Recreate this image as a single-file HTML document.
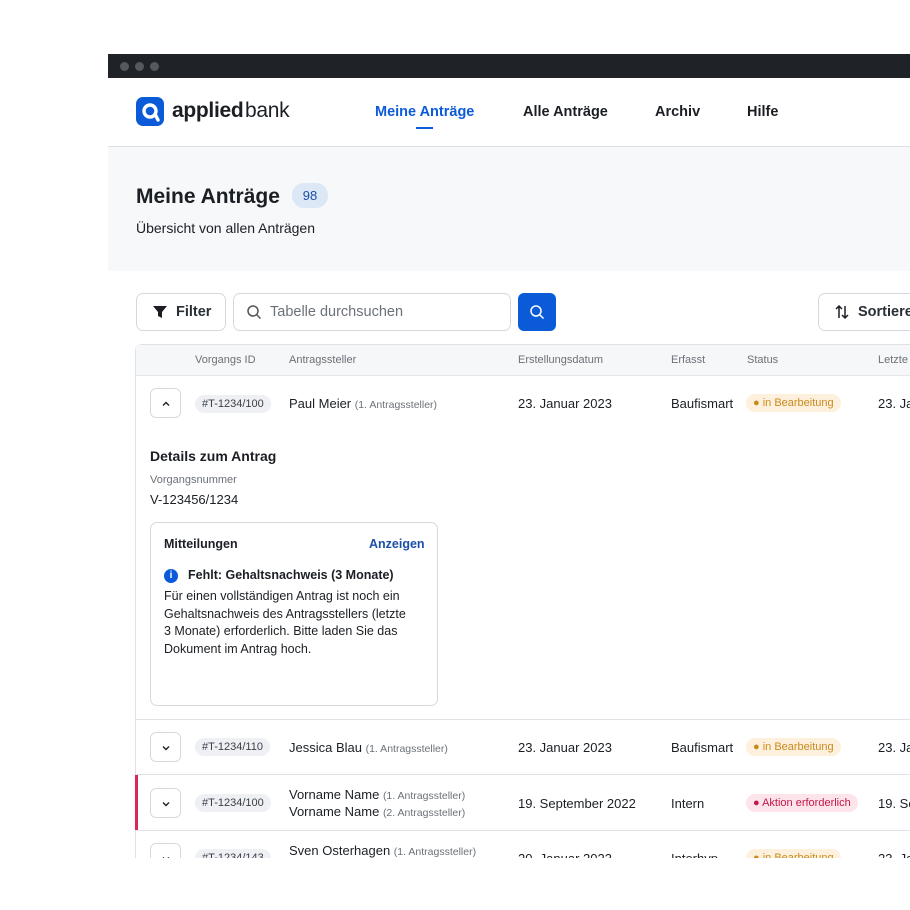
<!DOCTYPE html>
<html><head><meta charset="utf-8"><style>
*{box-sizing:border-box;margin:0;padding:0}
body{width:910px;height:910px;background:#fff;font-family:"Liberation Sans",sans-serif;color:#1b1f24;position:relative;overflow:hidden}
.a{position:absolute;white-space:nowrap}
.frame{position:absolute;left:108px;top:54px;width:802px;height:804px;overflow:hidden;background:#fff}
.bar{position:absolute;left:0;top:0;width:802px;height:24px;background:#1f2226}
.dot{position:absolute;top:8px;width:9px;height:9px;border-radius:50%;background:#55595e}
.nav{font-size:14.5px;font-weight:bold;top:50px}
.btn{position:absolute;border:1px solid #d5d9de;border-radius:7px;background:#fff}
.th{font-size:11px;color:#6b7178;top:300px}
.tag{position:absolute;background:#eef0f3;border-radius:9px;font-size:11px;color:#3a3f45;padding:3px 7px}
.exp{position:absolute;width:31px;height:30px;border:1px solid #d5d9de;border-radius:6px;left:42px}
.exp svg{position:absolute;left:10px;top:10px}
.cell{font-size:13px;color:#1b1f24}
.sub{font-size:10.5px;color:#6b7178}
.st{position:absolute;border-radius:10px;font-size:11px;padding:3px 7px}
.hr{position:absolute;left:28px;width:780px;height:1px;background:#dfe2e6}
</style></head><body>
<div class="frame">
<div class="bar"><div class="dot" style="left:12px"></div><div class="dot" style="left:27px"></div><div class="dot" style="left:42px"></div></div>
<div class="a" style="left:28px;top:43px;width:28px;height:29px;background:#0b5bd9;border-radius:7px"></div>
<svg class="a" style="left:28px;top:43px" width="28" height="29" viewBox="0 0 28 29"><circle cx="14" cy="14" r="6" fill="none" stroke="#fff" stroke-width="3.4"/><path d="M19 17 L22 23" stroke="#fff" stroke-width="3.4" stroke-linecap="round"/></svg>
<div class="a" style="left:64px;top:45px;font-size:21px;font-weight:bold;letter-spacing:-0.3px">applied <span style="font-weight:normal;margin-left:-4px">bank</span></div>
<div class="a nav" style="left:267px;color:#0b5bd9">Meine Anträge</div>
<div class="a" style="left:308px;top:73px;width:17px;height:2px;background:#0b5bd9"></div>
<div class="a nav" style="left:415px">Alle Anträge</div>
<div class="a nav" style="left:547px">Archiv</div>
<div class="a nav" style="left:639px">Hilfe</div>
<div class="a" style="left:0;top:92px;width:802px;height:1px;background:#dcdfe3"></div>
<div class="a" style="left:0;top:93px;width:802px;height:124px;background:#f6f8fa"></div>
<div class="a" style="left:28px;top:131px;font-size:21px;font-weight:bold">Meine Anträge</div>
<div class="a" style="left:184px;top:129px;width:36px;height:25px;border-radius:12px;background:#dde8f7;color:#1b4fa8;font-size:13px;text-align:center;line-height:25px">98</div>
<div class="a" style="left:28px;top:166px;font-size:14px">Übersicht von allen Anträgen</div>
<div class="btn" style="left:28px;top:239px;width:90px;height:38px"></div>
<svg class="a" style="left:44px;top:250px" width="16" height="16" viewBox="0 0 16 16"><path d="M1 2h14l-5 6v6l-4-2V8z" fill="#1b1f24"/></svg>
<div class="a" style="left:68px;top:250px;font-size:14.5px;font-weight:bold;color:#2a2f35">Filter</div>
<div class="btn" style="left:125px;top:239px;width:278px;height:38px"></div>
<svg class="a" style="left:138px;top:250px" width="16" height="16" viewBox="0 0 16 16"><circle cx="7" cy="7" r="5" fill="none" stroke="#555" stroke-width="1.5"/><path d="M11 11l3.5 3.5" stroke="#555" stroke-width="1.5"/></svg>
<div class="a" style="left:162px;top:250px;font-size:14.5px;color:#6b7178">Tabelle durchsuchen</div>
<div class="a" style="left:410px;top:239px;width:38px;height:38px;background:#0b5bd9;border-radius:6px"></div>
<svg class="a" style="left:421px;top:250px" width="16" height="16" viewBox="0 0 16 16"><circle cx="7" cy="7" r="5" fill="none" stroke="#fff" stroke-width="1.5"/><path d="M11 11l3.5 3.5" stroke="#fff" stroke-width="1.5"/></svg>
<div class="btn" style="left:710px;top:239px;width:120px;height:38px"></div>
<svg class="a" style="left:726px;top:250px" width="16" height="16" viewBox="0 0 16 16"><path d="M5 14V2M2 5l3-3 3 3M11 2v12M8 11l3 3 3-3" fill="none" stroke="#1b1f24" stroke-width="1.5"/></svg>
<div class="a" style="left:750px;top:250px;font-size:14.5px;font-weight:bold;color:#2a2f35">Sortieren</div>
<div class="a" style="left:27px;top:290px;width:800px;height:600px;border:1px solid #dfe2e6;border-radius:7px 0 0 0"></div>
<div class="a" style="left:28px;top:291px;width:780px;height:31px;background:#f6f7f8;border-bottom:1px solid #e4e7ea"></div>
<div class="a th" style="left:87px">Vorgangs ID</div>
<div class="a th" style="left:181px">Antragssteller</div>
<div class="a th" style="left:410px">Erstellungsdatum</div>
<div class="a th" style="left:563px">Erfasst</div>
<div class="a th" style="left:639px">Status</div>
<div class="a th" style="left:770px">Letzte</div>
<div class="exp" style="top:334px"><svg width="10" height="10" viewBox="0 0 10 10"><path d="M2 6.5L5 3.5l3 3" fill="none" stroke="#1b1f24" stroke-width="1.4"/></svg></div>
<div class="tag" style="left:87px;top:341px">#T-1234/100</div>
<div class="a cell" style="left:181px;top:342px">Paul Meier <span class="sub">(1. Antragssteller)</span></div>
<div class="a cell" style="left:410px;top:342px">23. Januar 2023</div>
<div class="a cell" style="left:563px;top:342px">Baufismart</div>
<div class="st" style="left:638px;top:340px;background:#fdf1de;color:#c98a1c">● in Bearbeitung</div>
<div class="a cell" style="left:770px;top:342px">23. Januar</div>
<div class="a" style="left:42px;top:394px;font-size:14px;font-weight:bold">Details zum Antrag</div>
<div class="a" style="left:42px;top:420px;font-size:11px;color:#6b7178">Vorgangsnummer</div>
<div class="a" style="left:42px;top:438px;font-size:13px">V-123456/1234</div>
<div class="a" style="left:42px;top:468px;width:288px;height:184px;border:1px solid #d5d9de;border-radius:7px"></div>
<div class="a" style="left:56px;top:483px;font-size:12.5px;font-weight:bold">Mitteilungen</div>
<div class="a" style="left:261px;top:483px;font-size:12.5px;font-weight:bold;color:#1b4fa8">Anzeigen</div>
<div class="a" style="left:56px;top:515px;width:14px;height:14px;border-radius:50%;background:#0b5bd9;color:#fff;font-size:10px;font-weight:bold;text-align:center;line-height:14px">i</div>
<div class="a" style="left:80px;top:514px;font-size:12.5px;font-weight:bold">Fehlt: Gehaltsnachweis (3 Monate)</div>
<div class="a" style="left:56px;top:534px;font-size:12.5px;line-height:17.5px;white-space:normal;width:262px">Für einen vollständigen Antrag ist noch ein Gehaltsnachweis des Antragsstellers (letzte<br>3 Monate) erforderlich. Bitte laden Sie das Dokument im Antrag hoch.</div>
<div class="hr" style="top:665px"></div>
<div class="exp" style="top:678px"><svg width="10" height="10" viewBox="0 0 10 10"><path d="M2 3.5L5 6.5l3-3" fill="none" stroke="#1b1f24" stroke-width="1.4"/></svg></div>
<div class="tag" style="left:87px;top:684px">#T-1234/110</div>
<div class="a cell" style="left:181px;top:686px">Jessica Blau <span class="sub">(1. Antragssteller)</span></div>
<div class="a cell" style="left:410px;top:686px">23. Januar 2023</div>
<div class="a cell" style="left:563px;top:686px">Baufismart</div>
<div class="st" style="left:638px;top:684px;background:#fdf1de;color:#c98a1c">● in Bearbeitung</div>
<div class="a cell" style="left:770px;top:686px">23. Januar</div>
<div class="hr" style="top:720px"></div>
<div class="a" style="left:27px;top:721px;width:3px;height:55px;background:#d9275a"></div>
<div class="exp" style="top:734px"><svg width="10" height="10" viewBox="0 0 10 10"><path d="M2 3.5L5 6.5l3-3" fill="none" stroke="#1b1f24" stroke-width="1.4"/></svg></div>
<div class="tag" style="left:87px;top:740px">#T-1234/100</div>
<div class="a cell" style="left:181px;top:733px">Vorname Name <span class="sub">(1. Antragssteller)</span></div>
<div class="a cell" style="left:181px;top:750px">Vorname Name <span class="sub">(2. Antragssteller)</span></div>
<div class="a cell" style="left:410px;top:742px">19. September 2022</div>
<div class="a cell" style="left:563px;top:742px">Intern</div>
<div class="st" style="left:638px;top:740px;background:#fce4ea;color:#c2184a">● Aktion erforderlich</div>
<div class="a cell" style="left:770px;top:742px">19. September</div>
<div class="hr" style="top:776px"></div>
<div class="exp" style="top:789px"><svg width="10" height="10" viewBox="0 0 10 10"><path d="M2 3.5L5 6.5l3-3" fill="none" stroke="#1b1f24" stroke-width="1.4"/></svg></div>
<div class="tag" style="left:87px;top:795px">#T-1234/143</div>
<div class="a cell" style="left:181px;top:789px">Sven Osterhagen <span class="sub">(1. Antragssteller)</span></div>
<div class="a cell" style="left:410px;top:797px">20. Januar 2023</div>
<div class="a cell" style="left:563px;top:797px">Interhyp</div>
<div class="st" style="left:638px;top:795px;background:#fdf1de;color:#c98a1c">● in Bearbeitung</div>
<div class="a cell" style="left:770px;top:797px">23. Januar</div>
</div>
</body></html>
